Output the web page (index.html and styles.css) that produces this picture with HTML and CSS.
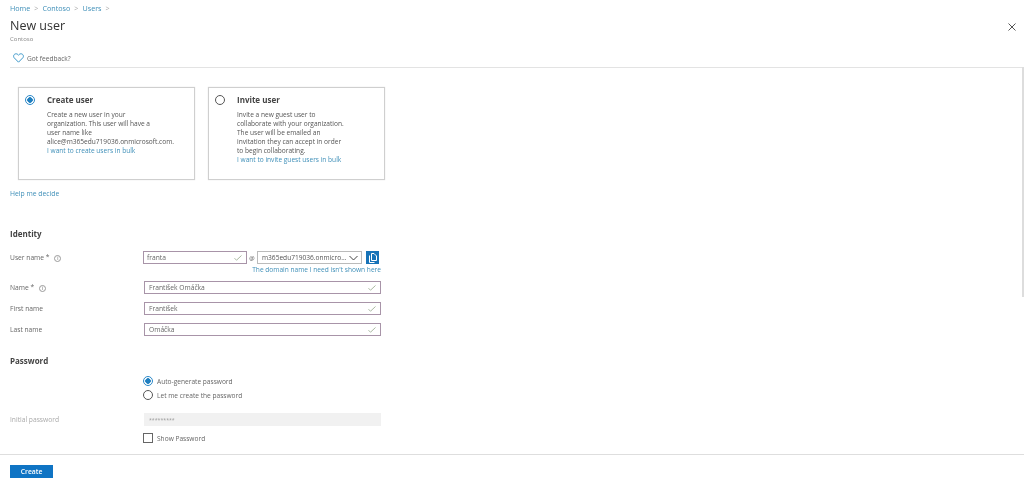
FILE: index.html
```html
<!DOCTYPE html>
<html lang="en">
<head>
    <meta charset="UTF-8">
    <title>New user</title>
    <link rel="stylesheet" href="styles.css">
</head>
<body>
    <div class="page">
        <nav class="breadcrumb">
            <a>Home</a><span class="sep">&gt;</span><a>Contoso</a><span class="sep">&gt;</span><a>Users</a><span class="sep">&gt;</span>
        </nav>
        <div class="title-row">
            <div>
                <h1>New user</h1>
                <div class="subtitle">Contoso</div>
            </div>
            <svg class="close" width="8" height="8" viewBox="0 0 8 8"><path d="M.5.5l7 7M7.5.5l-7 7" stroke="#555" stroke-width="1" fill="none"/></svg>
        </div>
        <div class="toolbar">
            <svg width="11" height="10" viewBox="0 0 11 10"><path d="M5.5 9.2L1.2 4.8C-.2 3.2 1 .8 3 .8c1.1 0 2 .6 2.5 1.5C6 1.4 6.900.8 8 .8c2 0 3.200 2.400 1.800 4z" fill="none" stroke="#3a96c8" stroke-width="1"/></svg>
            <span>Got feedback?</span>
        </div>

        <main class="content">
            <div class="cards">
                <div class="card">
                    <span class="radio checked"></span>
                    <div class="card-body">
                        <h3>Create user</h3>
                        <p>Create a new user in your<br>organization. This user will have a<br>user name like<br>alice@m365edu719036.onmicrosoft.com.<br><a>I want to create users in bulk</a></p>
                    </div>
                </div>
                <div class="card">
                    <span class="radio"></span>
                    <div class="card-body">
                        <h3>Invite user</h3>
                        <p>Invite a new guest user to<br>collaborate with your organization.<br>The user will be emailed an<br>invitation they can accept in order<br>to begin collaborating.<br><a>I want to invite guest users in bulk</a></p>
                    </div>
                </div>
            </div>
            <a class="help">Help me decide</a>

            <h2 class="section identity">Identity</h2>

            <div class="row row-user">
                <label>User name *<span class="info">i</span></label>
                <div class="user-fields">
                    <div class="user-line">
                        <div class="input user-input"><span>franta</span><svg class="check" width="8" height="6" viewBox="0 0 8 6"><path d="M.5 3.200l2 2L7.500.5" fill="none" stroke="#a9b8a0"/></svg></div>
                        <span class="at">@</span>
                        <div class="select"><span>m365edu719036.onmicro...</span><svg width="9" height="6" viewBox="0 0 9 6"><path d="M.5 1l4 4 4-4" fill="none" stroke="#444"/></svg></div>
                        <button class="copy"><svg width="8" height="10" viewBox="0 0 8 10"><path d="M2.500.5h2.500l2.500 2.500v4.500h-5zM.5 2.500v7h5" fill="none" stroke="#fff"/></svg></button>
                    </div>
                    <a class="domain-link">The domain name I need isn't shown here</a>
                </div>
            </div>
            <div class="row">
                <label>Name *<span class="info">i</span></label>
                <div class="input wide"><span>František Omáčka</span><svg class="check" width="8" height="6" viewBox="0 0 8 6"><path d="M.5 3.200l2 2L7.500.5" fill="none" stroke="#a9b8a0"/></svg></div>
            </div>
            <div class="row">
                <label>First name</label>
                <div class="input wide"><span>František</span><svg class="check" width="8" height="6" viewBox="0 0 8 6"><path d="M.5 3.200l2 2L7.500.5" fill="none" stroke="#a9b8a0"/></svg></div>
            </div>
            <div class="row">
                <label>Last name</label>
                <div class="input wide"><span>Omáčka</span><svg class="check" width="8" height="6" viewBox="0 0 8 6"><path d="M.5 3.200l2 2L7.500.5" fill="none" stroke="#a9b8a0"/></svg></div>
            </div>

            <h2 class="section password">Password</h2>

            <div class="options">
                <div class="option"><span class="radio checked"></span>Auto-generate password</div>
                <div class="option"><span class="radio"></span>Let me create the password</div>
            </div>
            <div class="row row-initial">
                <label class="muted">Initial password</label>
                <div class="input wide disabled"><span>*********</span></div>
            </div>
            <div class="option show-password"><span class="checkbox"></span>Show Password</div>
        </main>

        <footer class="footer">
            <button class="create">Create</button>
        </footer>
        <div class="scrollbar"></div>
    </div>
</body>
</html>
```

FILE: styles.css
```css
* {
    box-sizing: border-box;
}

html, body {
    margin: 0;
    height: 100%;
}

body {
    font-family: "Open Sans", "Noto Sans", sans-serif;
    font-size: 7px;
    color: #555;
    background: #fff;
}

a {
    color: #3f8fb8;
}

.page {
    position: relative;
    height: 485px;
    display: flex;
    flex-direction: column;
    overflow: hidden;
    filter: blur(.3px);
}

.breadcrumb {
    flex: none;
    padding: 4px 10px 0;
    height: 17px;
    line-height: 9px;
    font-size: 7.200px;
}

.sep {
    margin: 0 4px;
    color: #aaa;
}

.title-row {
    flex: none;
    display: flex;
    justify-content: space-between;
    padding: 0 8px 0 10px;
    height: 28px;
}

h1 {
    margin: 0;
    font-size: 12.500px;
    line-height: 18px;
    font-weight: 500;
    color: #333;
}

.subtitle {
    font-size: 6px;
    line-height: 8px;
    color: #888;
}

.close {
    margin-top: 6px;
}

.toolbar {
    flex: none;
    height: 23px;
    margin-left: 10px;
    padding: 8px 0 4px 3px;
    display: flex;
    align-items: center;
    gap: 3px;
    border-bottom: 1px solid #e3e3e3;
    font-size: 6.600px;
    color: #666;
}

.content {
    flex: 1;
    min-height: 0;
    padding: 19px 10px 0;
}

.cards {
    display: flex;
    gap: 13px;
    margin-left: 8px;
}

.card {
    width: 177px;
    height: 93px;
    border: 1px solid #cfcfcf;
    padding: 7px 6px;
    display: flex;
    gap: 12px;
    box-shadow: 0 0 1px #ddd;
}

.radio {
    flex: none;
    display: inline-block;
    width: 10px;
    height: 10px;
    border: 1px solid #555;
    border-radius: 50%;
    background: #fff;
}

.radio.checked {
    border-color: #2b88c8;
    background: radial-gradient(circle, #1f7fc0 0 2.5px, #fff 3px);
}

.card-body h3 {
    margin: 0 0 5px;
    font-size: 8px;
    line-height: 10px;
    font-weight: 700;
    color: #444;
}

.card-body p {
    margin: 0;
    font-size: 6.580px;
    line-height: 9.100px;
    white-space: nowrap;
}

.help {
    display: block;
    margin-top: 9px;
    line-height: 10px;
    font-size: 6.800px;
}

.section {
    margin: 0;
    font-size: 8px;
    line-height: 10px;
    font-weight: 700;
    color: #444;
}

.identity {
    margin-top: 30px;
    margin-bottom: 12px;
}

.row {
    display: flex;
    align-items: center;
    height: 13px;
    margin-bottom: 8px;
}

.row label {
    width: 134px;
    flex: none;
    font-size: 6.700px;
    color: #666;
}

.row .muted {
    color: #aaa;
}

.info {
    display: inline-block;
    width: 7px;
    height: 7px;
    margin-left: 5px;
    border: 1px solid #999;
    border-radius: 50%;
    font-size: 5px;
    line-height: 5px;
    text-align: center;
    vertical-align: 0;
}

.row-user {
    height: 24px;
    align-items: flex-start;
    margin-bottom: 6px;
}

.row-user label {
    width: 133px;
    padding-top: 2px;
}

.user-line {
    display: flex;
    align-items: center;
}

.input {
    height: 13px;
    border: 1px solid #a894a8;
    padding: 0 4px;
    display: flex;
    justify-content: space-between;
    align-items: center;
    font-size: 6.700px;
    color: #666;
}

.user-input {
    width: 104px;
    padding-left: 3px;
}

.wide {
    width: 237px;
}

.at {
    width: 10px;
    text-align: center;
    font-size: 6px;
}

.select {
    width: 105px;
    height: 13px;
    border: 1px solid #bbb;
    padding: 0 3px 0 4px;
    display: flex;
    justify-content: space-between;
    align-items: center;
    font-size: 6.600px;
    white-space: nowrap;
}

.copy {
    width: 13px;
    height: 13px;
    margin-left: 4px;
    padding: 0;
    border: 0;
    background: #1773b8;
    display: flex;
    align-items: center;
    justify-content: center;
}

.domain-link {
    display: block;
    text-align: right;
    margin: 1px -2px 0 0;
    line-height: 9px;
    font-size: 6.600px;
    white-space: nowrap;
}

.password {
    margin-top: 20px;
}

.options {
    margin: 8px 0 0 133px;
}

.option {
    display: flex;
    align-items: center;
    gap: 4px;
    height: 14px;
    font-size: 6.600px;
    color: #666;
}

.row-initial {
    margin-top: 11px;
    margin-bottom: 5px;
}

.disabled {
    background: #f1f1f1;
    border-color: #f1f1f1;
    color: #999;
    font-size: 5.200px;
}

.show-password {
    margin-left: 133px;
}

.checkbox {
    width: 10px;
    height: 10px;
    border: 1px solid #666;
    background: #fff;
}

.footer {
    flex: none;
    height: 31px;
    border-top: 1px solid #dedede;
    padding: 10px 10px 0;
}

.create {
    display: block;
    width: 43px;
    height: 13px;
    padding: 0;
    border: 0;
    background: #0f74c4;
    color: #fff;
    font-family: inherit;
    font-size: 6.800px;
    font-weight: 600;
}

.scrollbar {
    position: absolute;
    right: 0;
    top: 67px;
    width: 2px;
    height: 230px;
    background: #ddd;
}
```
